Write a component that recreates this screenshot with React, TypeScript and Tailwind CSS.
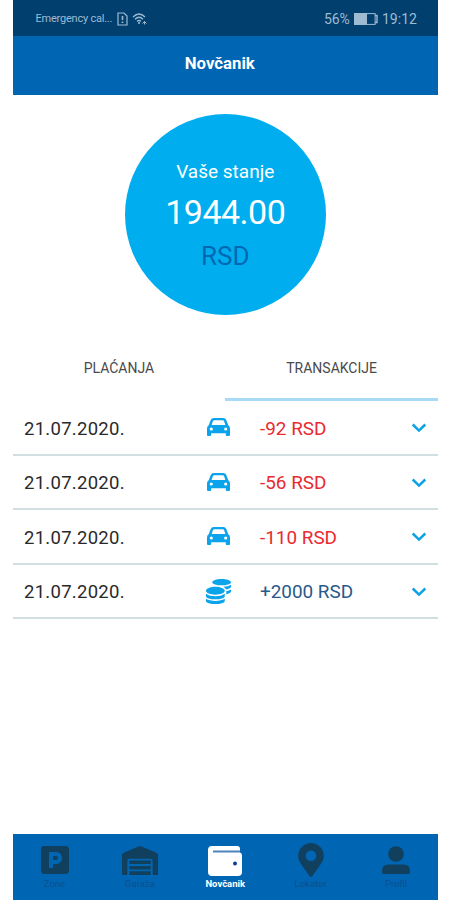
import { FaCoins, FaMapMarkerAlt, FaParking, FaWarehouse } from "react-icons/fa";

const rows = [
  { date: "21.07.2020.", amount: "-92 RSD", topUp: false },
  { date: "21.07.2020.", amount: "-56 RSD", topUp: false },
  { date: "21.07.2020.", amount: "-110 RSD", topUp: false },
  { date: "21.07.2020.", amount: "+2000 RSD", topUp: true },
];

function StatusBar() {
  return (
    <div className="flex h-9 items-center bg-[#003f6e] pl-[23px] pr-[20px] pt-[2px] text-[#9fbbd2]">
      <span className="w-[81px] whitespace-nowrap text-[11px] tracking-[-0.02em]">Emergency cal...</span>
      <svg className="h-[14px] w-[11px]" viewBox="0 0 11 14" fill="none" stroke="currentColor" strokeWidth="1.2">
        <path d="M1 1h6l3 3v9H1z" />
        <path d="M5.5 4v4M5.5 9.5v1.5" strokeWidth="1.6" />
      </svg>
      <svg className="ml-[4px] h-[14px] w-[16px]" viewBox="0 0 16 14" fill="none" stroke="currentColor" strokeWidth="1.3">
        <path d="M1 5Q7 -1 13 5M3 7.2Q7 3.3 11 7.2M5 9.4Q7 7.5 9 9.4" />
        <circle cx="7" cy="11" r="1" fill="currentColor" stroke="none" />
        <path d="M10.5 11.5l2-2 2 2M12.5 9.5v3" strokeWidth="1" />
      </svg>
      <div className="ml-auto flex items-center text-[14px]">
        <span className="w-[30px] whitespace-nowrap text-[14px] tracking-[-0.01em]">56%</span>
        <svg className="mr-[4px] h-[12px] w-[24px]" viewBox="0 0 24 12">
          <rect x="0.6" y="0.6" width="20.5" height="10.8" fill="none" stroke="currentColor" strokeWidth="1" />
          <rect x="0" y="0" width="13" height="12" fill="currentColor" />
          <path d="M21 2.5h2v7h-2" fill="none" stroke="currentColor" strokeWidth="1.4" />
        </svg>
        <span className="w-[36px] whitespace-nowrap">19:12</span>
      </div>
    </div>
  );
}

function Chevron() {
  return (
    <svg className="h-[10px] w-[16px]" viewBox="0 0 16 10" fill="none" stroke="#0ba3e6" strokeWidth="2.5">
      <path d="M1.7 1.5L8 7.6l6.3-6.1" />
    </svg>
  );
}

function Car() {
  return (
    <svg className="-mt-[2px] ml-[0.5px] h-[18px] w-[23px]" viewBox="0 0 23 18">
      <path
        fill="currentColor"
        fillRule="evenodd"
        d="M6.8 0h9.4q2.4 0 3.2 2.2L21.3 7.3Q23 8.3 23 10.5V17q0 1-1 1h-2.2q-1 0-1-1v-1.8H4.2V17q0 1-1 1H1q-1 0-1-1v-6.5Q0 8.3 1.7 7.3L3.6 2.2Q4.4 0 6.8 0zM7.3 2.2q-1 0-1.4 1L4.6 7h13.8L17.1 3.2q-.4-1-1.4-1zM4.3 9.4a1.6 1.6 0 1 0 0 3.2 1.6 1.6 0 0 0 0-3.2zM18.7 9.4a1.6 1.6 0 1 0 0 3.2 1.6 1.6 0 0 0 0-3.2z"
      />
    </svg>
  );
}

function Person() {
  return (
    <svg className="h-[28px] w-[28px]" viewBox="0 0 28 28" fill="currentColor">
      <circle cx="14" cy="8" r="7.8" />
      <path d="M0 28v-3.5Q0 18.5 7 18.5h14q7 0 7 6V26q0 2-2 2H2q-2 0-2-2z" />
    </svg>
  );
}

function Wallet() {
  return (
    <svg className="mt-[1px] h-[30px] w-[34px]" viewBox="0 0 34 30">
      <path d="M4 0h25q3 0 3 3v3.5q2 .5 2 3V26q0 4-4 4H4q-4 0-4-4V4q0-4 4-4z" fill="white" />
      <path d="M5 5.5h27" stroke="#4d83bd" strokeWidth="2" />
      <circle cx="27" cy="17.5" r="2" fill="#0a3f94" />
    </svg>
  );
}

const tabs = [
  { label: "Zone", icon: <FaParking className="ml-[2px] size-[32px]" />, active: false },
  { label: "Garaža", icon: <FaWarehouse className="h-[29px] w-[36px]" />, active: false },
  { label: "Novčanik", icon: <Wallet />, active: true },
  { label: "Lokator", icon: <FaMapMarkerAlt className="h-[34px] w-[26px]" />, active: false },
  { label: "Profil", icon: <Person />, active: false },
];

export default function App() {
  return (
    <div className="h-[900px] w-[450px] overflow-hidden bg-white pl-[12.5px] pr-[12px] font-['Roboto',sans-serif]">
      <div className="flex h-full flex-col">
        <StatusBar />
        <header className="flex h-[59px] items-center justify-center bg-[#0065b3] pb-[4px] pr-[11px] text-[16.8px] font-bold text-white">
          Novčanik
        </header>

        <section className="flex h-[241px] shrink-0 justify-center pt-[19px]">
          <div className="flex size-[201px] flex-col items-center rounded-full bg-[#00aeef] pt-[45px] text-white">
            <div className="h-[26px] text-[19px] leading-[26px]">Vaše stanje</div>
            <div className="mt-[5px] h-[44px] text-[34px] leading-[44px] tracking-[-0.015em]">1944.00</div>
            <div className="mt-[6px] h-[32px] text-[26px] leading-[32px] text-[#0068b3]">RSD</div>
          </div>
        </section>

        <div className="grid h-[65px] shrink-0 grid-cols-2 text-center text-[14px] text-[#4a4a4a]">
          <div className="pt-[22px]">PLAĆANJA</div>
          <div className="border-b-[3px] border-[#a9daf5] pt-[22px]">TRANSAKCIJE</div>
        </div>

        <div className="text-[18.9px]">
          {rows.map((row, i) => (
            <div key={i} className="flex h-[54.5px] items-center border-b-2 border-[#cfdfe2] pl-[11.5px] pr-[11px] pt-[2px]">
              <span className="w-[182px] pt-[3px] text-[18.5px] tracking-[0.015em] text-[#292929]">{row.date}</span>
              <span className="flex w-[54px] text-[#0ba3e9]">
                {row.topUp ? <FaCoins className="size-[25px]" /> : <Car />}
              </span>
              <span className={row.topUp ? "pt-[1px] text-[#28598a]" : "pt-[1px] text-[#e92a2f]"}>{row.amount}</span>
              <span className="ml-auto"><Chevron /></span>
            </div>
          ))}
        </div>

        <nav className="mt-auto flex h-[66px] justify-center bg-[#0065b3]">
          {tabs.map((tab) => (
            <div key={tab.label} className={tab.active ? "flex w-[85.4px] shrink-0 flex-col items-center text-white" : "flex w-[85.4px] shrink-0 flex-col items-center text-[#11405f]"}>
              <div className="flex h-[44px] items-center justify-center pt-[8px]">{tab.icon}</div>
              <div className={tab.active ? "text-[9.5px] font-bold leading-[12px]" : "text-[9.5px] leading-[12px] text-[#0b518b]"}>{tab.label}</div>
            </div>
          ))}
        </nav>
      </div>
    </div>
  );
}
